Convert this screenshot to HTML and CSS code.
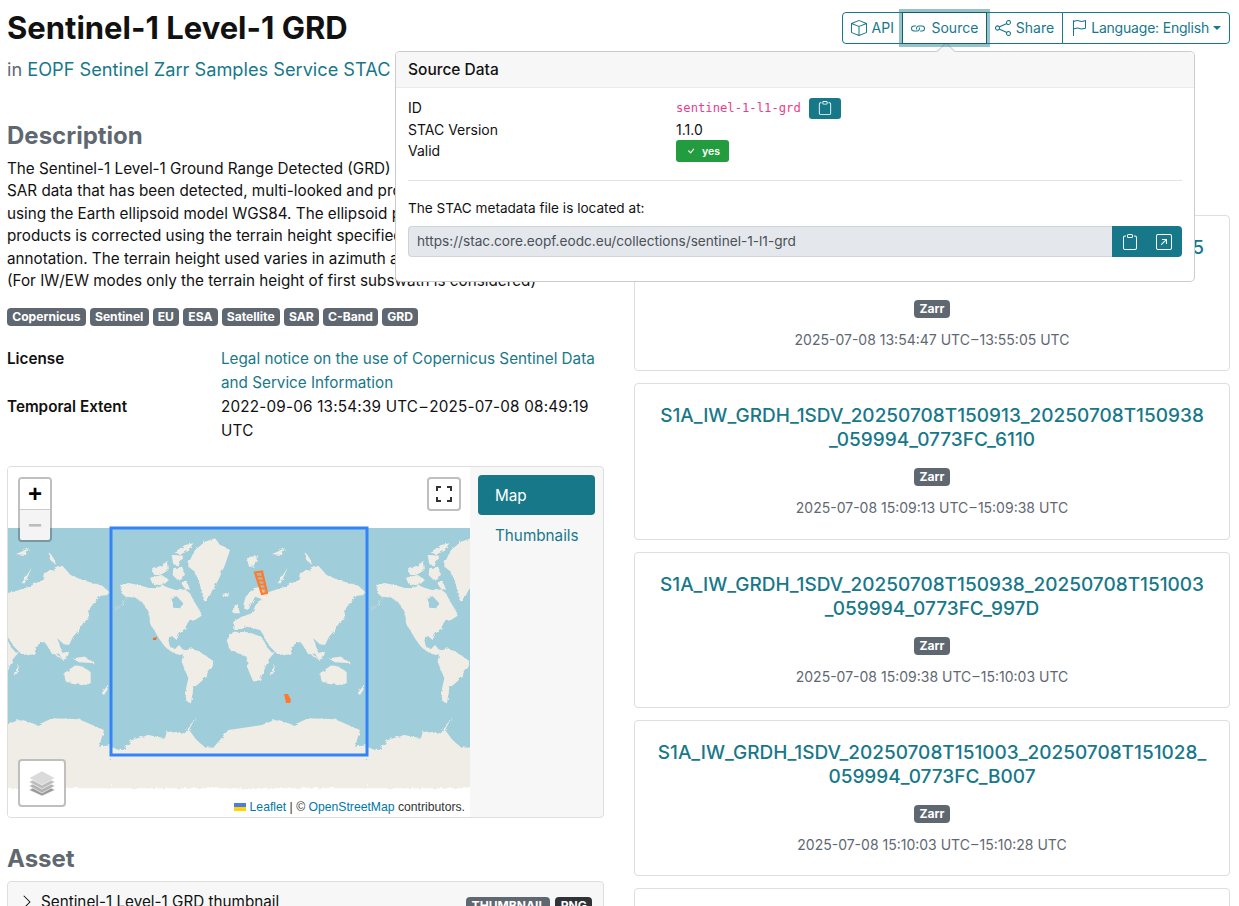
FILE: index.html
```html
<!DOCTYPE html>
<html lang="en">
<head>
<meta charset="utf-8">
<title>Sentinel-1 Level-1 GRD</title>
<link rel="stylesheet" href="styles.css">
</head>
<body>
<svg class="defs" width="0" height="0" aria-hidden="true">
  <defs>
    <symbol id="i-box" viewBox="0 0 16 16"><path d="M8.186 1.113a.5.5 0 0 0-.372 0L1.846 3.5 8 5.961 14.154 3.5 8.186 1.113zM15 4.239l-6.5 2.6v7.922l6.5-2.6V4.24zM7.5 14.762V6.838L1 4.239v7.925l6.5 2.6zM7.443.184a1.5 1.5 0 0 1 1.114 0l7.129 2.852A.5.5 0 0 1 16 3.5v8.662a1 1 0 0 1-.629.928l-7.185 2.874a.5.5 0 0 1-.372 0L.63 13.09a1 1 0 0 1-.63-.928V3.5a.5.5 0 0 1 .314-.464L7.443.184z"/></symbol>
    <symbol id="i-link" viewBox="0 0 16 16"><path d="M6.354 5.5H4a3 3 0 0 0 0 6h3a3 3 0 0 0 2.83-4H9c-.086 0-.17.01-.25.031A2 2 0 0 1 7 10.5H4a2 2 0 1 1 0-4h1.535c.218-.376.495-.714.82-1z"/><path d="M9 5.5a3 3 0 0 0-2.83 4h1.098A2 2 0 0 1 9 6.5h3a2 2 0 1 1 0 4h-1.535a4.02 4.02 0 0 1-.82 1H12a3 3 0 1 0 0-6H9z"/></symbol>
    <symbol id="i-share" viewBox="0 0 16 16"><path d="M13.5 1a1.5 1.5 0 1 0 0 3 1.5 1.5 0 0 0 0-3zM11 2.5a2.5 2.5 0 1 1 .603 1.628l-6.718 3.12a2.499 2.499 0 0 1 0 1.504l6.718 3.12a2.5 2.5 0 1 1-.488.876l-6.718-3.12a2.5 2.5 0 1 1 0-3.256l6.718-3.12A2.5 2.5 0 0 1 11 2.5zm-8.5 4a1.5 1.5 0 1 0 0 3 1.5 1.5 0 0 0 0-3zm11 5.5a1.5 1.5 0 1 0 0 3 1.5 1.5 0 0 0 0-3z"/></symbol>
    <symbol id="i-flag" viewBox="0 0 16 16"><path d="M14.778.085A.5.5 0 0 1 15 .5V8a.5.5 0 0 1-.314.464L14.5 8l.186.464-.003.001-.006.003-.023.009a12.435 12.435 0 0 1-.397.15c-.264.095-.631.223-1.047.35-.816.252-1.879.523-2.71.523-.847 0-1.548-.28-2.158-.525l-.028-.01C7.68 8.71 7.14 8.5 6.5 8.5c-.7 0-1.638.23-2.437.477A19.626 19.626 0 0 0 3 9.342V15.5a.5.5 0 0 1-1 0V.5a.5.5 0 0 1 1 0v.282c.226-.079.496-.17.79-.26C4.606.272 5.67 0 6.5 0c.84 0 1.524.277 2.121.519l.043.018C9.286.788 9.828 1 10.5 1c.7 0 1.638-.23 2.437-.477a19.587 19.587 0 0 0 1.349-.476l.019-.007.004-.002.001-.001zM14 1.221c-.22.078-.48.167-.766.255-.81.252-1.872.523-2.734.523-.886 0-1.592-.286-2.203-.534l-.008-.002C7.662 1.21 7.139 1 6.5 1c-.669 0-1.606.229-2.415.478A21.294 21.294 0 0 0 3 1.845v6.433c.22-.078.48-.167.766-.255C4.576 7.77 5.638 7.5 6.5 7.5c.847 0 1.548.28 2.158.525l.028.01C9.32 8.29 9.86 8.5 10.5 8.5c.668 0 1.606-.229 2.415-.478A21.317 21.317 0 0 0 14 7.655V1.222z"/></symbol>
    <symbol id="i-clip" viewBox="0 0 16 16"><path d="M4 1.5H3a2 2 0 0 0-2 2V14a2 2 0 0 0 2 2h10a2 2 0 0 0 2-2V3.5a2 2 0 0 0-2-2h-1v1h1a1 1 0 0 1 1 1V14a1 1 0 0 1-1 1H3a1 1 0 0 1-1-1V3.5a1 1 0 0 1 1-1h1v-1z"/><path d="M9.5 1a.5.5 0 0 1 .5.5v1a.5.5 0 0 1-.5.5h-3a.5.5 0 0 1-.5-.5v-1a.5.5 0 0 1 .5-.5h3zm-3-1A1.5 1.5 0 0 0 5 1.5v1A1.5 1.5 0 0 0 6.5 4h3A1.5 1.5 0 0 0 11 2.5v-1A1.5 1.5 0 0 0 9.500 0h-3z"/></symbol>
    <symbol id="i-ext" viewBox="0 0 16 16"><path d="M15 2a1 1 0 0 0-1-1H2a1 1 0 0 0-1 1v12a1 1 0 0 0 1 1h12a1 1 0 0 0 1-1V2zM0 2a2 2 0 0 1 2-2h12a2 2 0 0 1 2 2v12a2 2 0 0 1-2 2H2a2 2 0 0 1-2-2V2zm5.854 8.803a.5.5 0 1 1-.708-.707L9.243 6H6.475a.5.5 0 1 1 0-1h3.975a.5.5 0 0 1 .5.5v3.975a.5.5 0 1 1-1 0V6.707l-4.096 4.096z"/></symbol>
    <symbol id="i-check" viewBox="0 0 16 16"><path d="M10.97 4.97a.75.75 0 0 1 1.07 1.05l-3.99 4.99a.75.75 0 0 1-1.08.02L4.324 8.384a.75.75 0 1 1 1.06-1.06l2.094 2.093 3.473-4.425a.267.267 0 0 1 .02-.022z"/></symbol>
    <symbol id="i-chev" viewBox="0 0 16 16"><path d="M4.646 1.646a.5.5 0 0 1 .708 0l6 6a.5.5 0 0 1 0 .708l-6 6a.5.5 0 0 1-.708-.708L10.293 8 4.646 2.354a.5.5 0 0 1 0-.708z"/></symbol>
  </defs>
</svg>

<div class="page">
  <header class="head">
    <div>
      <h1 class="title">Sentinel-1 Level-1 GRD</h1>
      <p class="lead">in <a href="#">EOPF Sentinel Zarr Samples Service STAC API</a></p>
    </div>
    <div class="btn-group">
      <button class="btn"><svg class="ic16"><use href="#i-box"/></svg>API</button>
      <button class="btn btn-active"><svg class="ic16"><use href="#i-link"/></svg>Source</button>
      <button class="btn"><svg class="ic16"><use href="#i-share"/></svg>Share</button>
      <button class="btn btn-lang"><svg class="ic16"><use href="#i-flag"/></svg>Language: English<span class="caret"></span></button>
    </div>
  </header>

  <div class="columns">
    <main class="col-left">
      <h2 class="section first">Description</h2>
      <p class="desc">The Sentinel-1 Level-1 Ground Range Detected (GRD) products consist of<br>SAR data that has been detected, multi-looked and projected to ground range<br>using the Earth ellipsoid model WGS84. The ellipsoid projection of the GRD<br>products is corrected using the terrain height specified in the product general<br>annotation. The terrain height used varies in azimuth and is constant in range<br>(For IW/EW modes only the terrain height of first subswath is considered)</p>
      <div class="tags">
        <span class="badge">Copernicus</span><span class="badge">Sentinel</span><span class="badge">EU</span><span class="badge">ESA</span><span class="badge">Satellite</span><span class="badge">SAR</span><span class="badge">C-Band</span><span class="badge">GRD</span>
      </div>
      <dl class="meta">
        <dt>License</dt>
        <dd><a href="#">Legal notice on the use of Copernicus Sentinel Data and Service Information</a></dd>
        <dt>Temporal Extent</dt>
        <dd class="nums">2022-09-06 13:54:39 UTC&#8202;–&#8202;2025-07-08 08:49:19<br>UTC</dd>
      </dl>

      <section class="map-card">
        <div class="map">
          <svg class="map-svg" width="462" height="350" viewBox="0 0 462 350">
            <defs>
              <filter id="coast" x="-5%" y="-5%" width="110%" height="110%">
                <feTurbulence type="fractalNoise" baseFrequency=".22" numOctaves="3" seed="4" result="n"/>
                <feDisplacementMap in="SourceGraphic" in2="n" scale="3.5"/>
                <feGaussianBlur stdDeviation=".25"/>
              </filter>
              <g id="world">
                <rect x="0" y="0" width="256" height="256" fill="#a0cdda"/>
                <g filter="url(#coast)">
                <g fill="#f0ede7" fill-rule="evenodd" transform="scale(.33333) translate(-18 -9)">
                  <path d="M45 180 70 174 100 180 130 188 150 190 175 182 195 190 215 196 235 190 255 205 265 225 283 255 290 272 270 285 250 290 240 310 222 328 215 345 200 332 190 345 195 365 210 372 222 360 232 372 262 385 240 385 225 390 205 385 180 365 165 345 150 320 135 295 132 265 115 235 90 218 65 215 45 245 25 262 55 235 62 215 50 205ZM200 222 215 214 232 232 226 250 205 248Z"/>
                  <path d="M235 378 262 370 292 385 328 410 322 425 300 460 265 490 258 535 245 530 240 505 250 460 230 410Z"/>
                  <path d="M250 115 270 75 300 50 330 40 345 60 375 75 360 120 340 165 320 200 305 230 295 225 285 180 270 140 250 125Z"/>
                  <path d="M208 82 240 60 265 55 250 78 225 88ZM200 90 235 92 222 122 205 118ZM140 135 170 120 188 108 192 135 165 150 148 150ZM135 158 170 150 192 165 172 182 142 176ZM205 130 232 125 240 150 218 165 203 150ZM228 172 246 168 255 195 238 190Z"/>
                  <path d="M415 240 422 215 445 190 465 185 480 205 510 195 540 185 580 165 585 145 610 135 640 122 665 150 700 165 760 182 780 200 775 210 755 212 730 240 712 265 705 290 690 315 672 335 660 360 645 358 625 340 640 385 610 388 590 355 572 350 555 385 545 392 515 385 490 360 475 330 465 315 425 305 410 312 385 312 385 290 410 275 440 265 452 240 470 222 450 215 430 255 415 250Z"/>
                  <path d="M365 345 385 320 430 322 470 335 485 365 498 380 510 380 490 405 480 430 465 465 445 470 430 435 425 395 375 375Z"/>
                  <path d="M645 445 680 420 700 425 725 440 725 475 700 480 650 470Z"/>
                  <path d="M495 445 510 420 505 445 497 452ZM758 505 778 478 775 495 765 510ZM385 240 398 238 405 265 385 265ZM350 206 372 203 370 214 355 216ZM425 97 460 92 445 125 432 125ZM518 175 548 128 528 175ZM598 80 612 95 622 120 604 105ZM500 88 540 70 530 90ZM705 275 716 250 722 280 705 295ZM605 375 640 400 625 395ZM630 385 660 380 655 400 640 405ZM670 400 705 395 740 415 690 412Z"/>
                  <path d="M18 670 55 675 80 645 130 630 180 640 185 620 240 625 275 570 252 615 275 645 300 667 325 668 370 615 470 600 515 583 565 600 610 580 690 583 765 615 750 665 786 660 786 790 18 790Z"/>
                </g>
                </g>
                <rect x="0" y="232" width="256" height="24" fill="#f0ede7"/>
              </g>
            </defs>
            <g transform="translate(103 61)">
              <use href="#world" x="-256"/>
              <use href="#world" x="0"/>
              <use href="#world" x="256"/>
              <rect x="0" y="0" width="256" height="227" fill="none" stroke="#3384fb" stroke-width="3"/>
              <path d="M144 44.500 151 43.500 156 65 151 66Z" fill="#ff7a2b" fill-opacity=".3" stroke="#ff7a2b" stroke-width="2.200"/>
              <path d="M146 48.500H152M147 52.500H153M148 56.500H154M149 60.500H155" stroke="#ff7a2b" stroke-width="1.500"/>
              <path d="M42 110 46 109 45 112 42 112Z" fill="#f06a26"/>
              <path d="M173 166 177 166 180 172 179 175 175 175Z" fill="#ff7a2b"/>
            </g>
          </svg>
          <div class="zoom-ctl"><span class="zoom-btn">+</span><span class="zoom-btn zoom-off">−</span></div>
          <div class="full-ctl">
            <svg width="16" height="16" viewBox="0 0 16 16" fill="none" stroke="#333" stroke-width="2"><path d="M1 5V1H5M11 1H15V5M15 11V15H11M5 15H1V11"/></svg>
          </div>
          <div class="layers-ctl">
            <svg width="26" height="26" viewBox="0 0 26 26"><path d="M0 20 13 13 26 20 13 26Z" fill="#9a9a9a" stroke="#fff" stroke-width=".6"/><path d="M0 16 13 9 26 16 13 23Z" fill="#b3b3b3" stroke="#fff" stroke-width=".6"/><path d="M0 12 13 5 26 12 13 19Z" fill="#bdbdbd" stroke="#fff" stroke-width=".6"/><path d="M0 8 13 1 26 8 13 15Z" fill="#dadada" stroke="#fff" stroke-width=".6"/></svg>
          </div>
          <div class="attrib"><span class="ua"></span> <a href="#">Leaflet</a> | © <a href="#">OpenStreetMap</a> contributors.</div>
        </div>
        <nav class="map-nav">
          <a class="pill pill-on" href="#">Map</a>
          <a class="pill" href="#">Thumbnails</a>
        </nav>
      </section>

      <h2 class="section asset-h">Asset</h2>
      <div class="accordion">
        <svg class="chev"><use href="#i-chev"/></svg>
        <span class="acc-title">Sentinel-1 Level-1 GRD thumbnail</span>
        <span class="badge acc-b">THUMBNAIL</span><span class="badge badge-dark acc-b">PNG</span>
      </div>
    </main>

    <aside class="col-right">
      <article class="card">
        <a class="card-title" href="#">S1A_IW_GRDH_1SDV_20250708T135447_20250708T135505<br>_059994_0773FC_59A5</a>
        <span class="badge">Zarr</span>
        <p class="card-date">2025-07-08 13:54:47 UTC&#8202;–&#8202;13:55:05 UTC</p>
      </article>
      <article class="card">
        <a class="card-title" href="#">S1A_IW_GRDH_1SDV_20250708T150913_20250708T150938<br>_059994_0773FC_6110</a>
        <span class="badge">Zarr</span>
        <p class="card-date">2025-07-08 15:09:13 UTC&#8202;–&#8202;15:09:38 UTC</p>
      </article>
      <article class="card">
        <a class="card-title" href="#">S1A_IW_GRDH_1SDV_20250708T150938_20250708T151003<br>_059994_0773FC_997D</a>
        <span class="badge">Zarr</span>
        <p class="card-date">2025-07-08 15:09:38 UTC&#8202;–&#8202;15:10:03 UTC</p>
      </article>
      <article class="card">
        <a class="card-title" href="#">S1A_IW_GRDH_1SDV_20250708T151003_20250708T151028_<br>059994_0773FC_B007</a>
        <span class="badge">Zarr</span>
        <p class="card-date">2025-07-08 15:10:03 UTC&#8202;–&#8202;15:10:28 UTC</p>
      </article>
      <article class="card"></article>
    </aside>
  </div>
</div>

<div class="popover">
  <span class="arrow"></span>
  <div class="pop-head">Source Data</div>
  <div class="pop-body">
    <div class="pop-grid">
      <span>ID</span>
      <span class="pop-val"><code class="code">sentinel-1-l1-grd</code><button class="mini-btn"><svg class="ic14"><use href="#i-clip"/></svg></button></span>
      <span>STAC Version</span>
      <span>1.1.0</span>
      <span>Valid</span>
      <span><span class="valid"><svg class="ic12"><use href="#i-check"/></svg>yes</span></span>
    </div>
    <hr class="rule">
    <p class="located">The STAC metadata file is located at:</p>
    <div class="url-group">
      <span class="url">https://stac.core.eopf.eodc.eu/collections/sentinel-1-l1-grd</span>
      <span class="url-btns"><svg class="ic16"><use href="#i-clip"/></svg><svg class="ic16"><use href="#i-ext"/></svg></span>
    </div>
  </div>
</div>
</body>
</html>
```
FILE: styles.css
```css
* { box-sizing: border-box; }
html, body { margin: 0; height: 906px; overflow: hidden; }
body {
  font-family: Inter, "Liberation Sans", sans-serif;
  font-size: 16px;
  line-height: 24px;
  color: #111;
  background: #fff;
  position: relative;
}
a { color: #17788a; text-decoration: none; }
.defs { position: absolute; }
.page { padding: 0 9px 0 7px; }

.head { display: flex; justify-content: space-between; align-items: flex-start; height: 93px; }
.title { margin: 8px 0 0; font-size: 31px; line-height: 40px; font-weight: 700; color: #111; }
.lead { margin: 8px 0 0; font-size: 18.200px; line-height: 27px; color: #5f6871; }

.btn-group { display: flex; margin-top: 12px; }
.btn {
  display: flex; align-items: center; gap: 5px;
  height: 32px; padding: 0 8px 1px;
  font: 14px/21px Inter, "Liberation Sans", sans-serif;
  color: #17788a; background: #fff;
  border: 1px solid #17788a; margin-left: -1px;
}
.btn:first-child { border-radius: 4px 0 0 4px; margin-left: 0; }
.btn:last-child { border-radius: 0 4px 4px 0; }
.btn-active { box-shadow: 0 0 0 3px rgba(23, 120, 138, .45); position: relative; z-index: 1; border-color: #12606f; padding: 0 7.500px 1px; }
.btn-lang { letter-spacing: -.2px; padding-right: 8px; gap: 4px; }
.caret { width: 0; height: 0; border: 4px solid transparent; border-top-color: #17788a; border-bottom: 0; }
.ic16 { width: 16px; height: 16px; fill: currentColor; flex: none; }
.ic14 { width: 14px; height: 14px; fill: currentColor; }
.ic12 { width: 12px; height: 12px; fill: currentColor; }

.columns { display: grid; grid-template-columns: 597px 596px; column-gap: 30px; }
.section { margin: 0; font-size: 24px; line-height: 29px; font-weight: 700; color: #5f6871; }
.first { margin-top: 28px; }
.desc { margin: 8px 0 0; font-size: 15.250px; line-height: 22.400px; }
.tags { display: flex; gap: 4px; margin-top: 16px; }
.badge {
  display: inline-block; padding: 0 5.200px; height: 18px;
  font-size: 12.100px; line-height: 18px; font-weight: 700; color: #fff;
  background: #5f6871; border-radius: 4px;
}
.badge-dark { background: #2f3338; }
.meta { display: grid; grid-template-columns: 214px 1fr; margin: 21px 0 23px; }
.meta dt { font-weight: 600; font-size: 15.250px; }
.meta dd { margin: 0; font-size: 15.250px; }
.nums { letter-spacing: .2px; }

.map-card {
  display: flex; height: 352px; border: 1px solid #dedede; border-radius: 4px; background: #f7f7f7; overflow: hidden;
}
.map { position: relative; width: 462px; height: 350px; background: #fff; flex: none; }
.map-svg { display: block; }
.zoom-ctl {
  position: absolute; left: 10px; top: 10px; width: 34px;
  border: 2px solid rgba(0,0,0,.25); border-radius: 4px; overflow: hidden; display: flex; flex-direction: column;
}
.zoom-btn { height: 30px; background: #fff; text-align: center; font: 700 24px/30px "Liberation Sans", sans-serif; color: #000; }
.zoom-off { background: #f4f4f4; color: #bbb; border-top: 1px solid #ccc; height: 31px; }
.full-ctl, .layers-ctl {
  position: absolute; background: #fff; border: 2px solid rgba(0,0,0,.25); border-radius: 4px;
  display: flex; align-items: center; justify-content: center;
}
.full-ctl { left: 419px; top: 10px; width: 34px; height: 34px; }
.layers-ctl { left: 10px; top: 292px; width: 48px; height: 48px; }
.attrib { position: absolute; right: 5px; bottom: 1px; font: 12.200px/17px "Liberation Sans", Arial, sans-serif; color: #333; }
.attrib a { color: #0078a8; }
.ua { display: inline-block; width: 12px; height: 8px; background: linear-gradient(#4c7be1 50%, #ffd500 50%); }
.map-nav { flex: 1; padding: 8px; display: flex; flex-direction: column; min-width: 0; }
.pill { height: 40px; padding: 0 10px 0 17px; line-height: 42px; border-radius: 4px; font-size: 15.250px; }
.pill-on { background: #17788a; color: #fff; }

.asset-h { margin-top: 26px; }
.accordion {
  display: flex; align-items: center; height: 40px; margin-top: 8px; padding: 2px 11px 0 11px;
  background: #f7f7f7; border: 1px solid #dedede; border-radius: 4px;
}
.chev { width: 16px; height: 16px; fill: #111; flex: none; }
.acc-title { margin-left: 6px; flex: 1; font-size: 15.250px; }
.acc-b { margin-left: 5px; margin-top: 8px; }

.col-right { display: flex; flex-direction: column; gap: 12px; padding-top: 122px; }
.card {
  height: 156.350px; flex: none; padding: 20px 12px 0; text-align: center;
  border: 1px solid #dedede; border-radius: 4px; background: #fff;
}
.card-title { display: block; font-size: 19px; line-height: 24px; font-weight: 500; margin-bottom: 11px; }
.card-date { margin: 11px 0 0; font-size: 14px; line-height: 20px; color: #5f6871; }

.popover {
  position: absolute; left: 395px; top: 51px; width: 800px; height: 231px;
  background: #fff; border: 1px solid rgba(0,0,0,.2); border-radius: 5px; font-size: 14px; line-height: 21px;
}
.arrow {
  position: absolute; left: 543px; top: -8px; width: 14px; height: 14px; background: #f7f7f7;
  border-left: 1px solid #ccc; border-top: 1px solid #ccc; transform: rotate(45deg) scale(.9);
}
.pop-head { height: 36px; padding: 0 12px; font-size: 15.500px; line-height: 35px; font-weight: 500; background: #f7f7f7; border-bottom: 1px solid #ebebeb; border-radius: 4px 4px 0 0; }
.pop-body { padding: 9px 12px 0; }
.pop-grid { display: grid; grid-template-columns: 268px 1fr; }
.pop-val { display: flex; align-items: center; gap: 8px; height: 22px; }
.code { font: 12.200px "DejaVu Sans Mono", monospace; color: #e83e8c; }
.mini-btn { display: flex; align-items: center; justify-content: center; width: 32px; height: 21px; padding: 0; border: 0; border-radius: 3px; background: #17788a; color: #fff; }
.valid { display: inline-flex; align-items: center; gap: 5px; height: 22px; padding: 0 9px; background: #229c3e; color: #fff; border-radius: 3px; font-size: 10.500px; font-weight: 600; }
.rule { margin: 18px 0 17px; border: 0; border-top: 1px solid #e2e2e2; }
.located { margin: 0 0 7px; font-size: 13.600px; }
.url-group { display: flex; height: 31px; }
.url { flex: 1; padding: 0 8px; background: #e4e7ec; border: 1px solid #ced4da; border-right: 0; border-radius: 4px 0 0 4px; line-height: 29px; font-size: 13.650px; color: #4a5058; }
.url-btns { display: flex; align-items: center; justify-content: space-between; width: 70px; padding: 0 10px; background: #17788a; color: #fff; border-radius: 0 4px 4px 0; }
```
